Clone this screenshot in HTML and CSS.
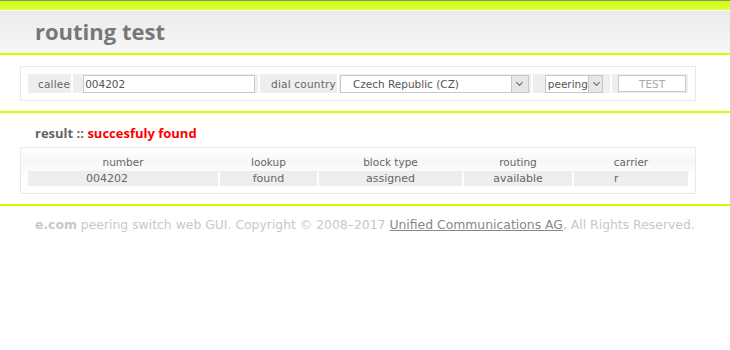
FILE: index.html
```html
<!DOCTYPE html>
<html lang="en">

<head>
    <meta charset="UTF-8">
    <title>routing test</title>
    <link rel="stylesheet" href="styles.css">
</head>

<body>
    <div class="topbar"></div>
    <div class="header">
        <h1 class="title">routing test</h1>
    </div>

    <div class="box form-box">
        <table class="form" cellspacing="2">
            <tr>
                <td class="label l-callee">callee</td>
                <td class="field callee-cell"><input type="text" class="input" value="004202"></td>
                <td class="label l-country">dial country</td>
                <td class="field country-cell"><div class="select country"><span>Czech Republic (CZ)</span><span class="arrow"></span></div></td>
                <td class="field peering-cell"><div class="select peering"><span>peering</span><span class="arrow"></span></div></td>
                <td class="field test-cell"><button class="button">TEST</button></td>
            </tr>
        </table>
    </div>

    <div class="line"></div>

    <h2 class="result-title">result :: <span class="ok">succesfuly found</span></h2>

    <div class="box result-box">
        <table class="result" cellspacing="2">
            <tr class="head">
                <th class="c-number">number</th>
                <th class="c-lookup">lookup</th>
                <th class="c-block">block type</th>
                <th class="c-routing">routing</th>
                <th class="c-carrier">carrier</th>
            </tr>
            <tr class="row">
                <td class="num">004202</td>
                <td>found</td>
                <td>assigned</td>
                <td>available</td>
                <td class="carrier">r</td>
            </tr>
        </table>
    </div>

    <div class="line"></div>

    <p class="footer"><b>e.com</b> peering switch web GUI. Copyright &copy; 2008&ndash;2017 <a href="#">Unified Communications AG</a>, All Rights Reserved.</p>
</body>

</html>
```

FILE: styles.css
```css
body {
    margin: 0;
    background: #fff;
    font-family: "DejaVu Sans", Verdana, sans-serif;
    font-size: 11px;
    color: #666;
}

.topbar {
    height: 9px;
    border-top: 1px solid #8c8c8c;
    border-bottom: 1px solid #fff;
    background: linear-gradient(#ccff00, #dcff4a);
}

.header {
    height: 42px;
    background: linear-gradient(#ebebeb, #f7f7f7);
    border-bottom: 2px solid #ccff00;
}

.title {
    margin: 0;
    padding: 5px 0 0 35px;
    font-family: "Open Sans", sans-serif;
    font-size: 22px;
    font-weight: bold;
    color: #777;
    letter-spacing: 0;
}

.box {
    margin: 0 34px 0 20px;
    border: 1px solid #e8e8e8;
    padding: 5px;
}

.form-box {
    margin-top: 11px;
    margin-bottom: 10px;
}

table {
    border-collapse: separate;
    table-layout: fixed;
}

.form td {
    background: #eee;
    height: 19px;
    padding: 0;
    box-sizing: border-box;
}

.form .label {
    text-align: right;
    padding-right: 1px;
    font-size: 10.5px;
    letter-spacing: 0.2px;
    white-space: nowrap;
}

.l-callee { width: 44px; }
.l-country { width: 78px; }

.callee-cell {
    width: 185px;
    padding-left: 10px !important;
}

.country-cell {
    width: 192px;
    padding-left: 1px !important;
}

.input {
    box-sizing: border-box;
    width: 172px;
    height: 18px;
    border: 1px solid #c8c8c8;
    padding: 0 1px;
    font-family: "DejaVu Sans", sans-serif;
    font-size: 10.5px;
    color: #555;
    display: block;
}

.select {
    box-sizing: border-box;
    height: 18px;
    border: 1px solid #c8c8c8;
    background: #fff;
    display: flex;
    align-items: center;
    justify-content: space-between;
    padding-left: 12px;
    font-size: 10.5px;
    color: #555;
}

.country {
    width: 189px;
}

.peering {
    width: 58px;
    padding-left: 2px;
}

.peering-cell {
    width: 78px;
    padding-left: 12px !important;
}

.arrow {
    width: 16px;
    height: 16px;
    border-left: 1px solid #c8c8c8;
    background: #e6e6e6;
    position: relative;
}

.arrow::after {
    content: "";
    position: absolute;
    left: 5px;
    top: 4px;
    width: 4px;
    height: 4px;
    border-right: 1px solid #666;
    border-bottom: 1px solid #666;
    transform: rotate(45deg);
}

.test-cell {
    width: 76px;
    padding-left: 6px !important;
}

.button {
    box-sizing: border-box;
    width: 68px;
    height: 17px;
    border: 1px solid #c8c8c8;
    background: #fff;
    font-family: "DejaVu Sans", sans-serif;
    font-size: 10.5px;
    color: #aaa;
    padding: 0;
    display: block;
}

.line {
    height: 2px;
    background: #ccff00;
}

.result-title {
    margin: 0;
    padding: 11px 0 5px 35px;
    font-family: "Open Sans", sans-serif;
    font-size: 13px;
    font-weight: bold;
    color: #666;
}

.ok {
    color: #ff0000;
}

.result-box {
    padding: 4px 5px 5px;
    margin-bottom: 10px;
    background: linear-gradient(#fff, #f7f7f7 30%, #fff 70%);
}

.result {
    width: 664px;
}

.result th {
    font-weight: normal;
    font-size: 10.5px;
    height: 15px;
    padding: 0;
    text-align: center;
}

.result td {
    background: #eee;
    height: 15px;
    padding: 0;
    text-align: center;
}

.c-number { width: 190px; }
.c-lookup { width: 97px; }
.c-block { width: 143px; }
.c-routing { width: 108px; }
.c-carrier { width: 114px; }

.result .num {
    text-align: left;
    padding-left: 58px;
}

.result .carrier {
    text-align: left;
    padding-left: 40px;
}

.footer {
    margin: 0;
    padding: 11px 0 0 35px;
    font-family: "DejaVu Sans", sans-serif;
    font-size: 12.4px;
    color: #c8c8c8;
}

.footer a {
    color: #888;
}
```
